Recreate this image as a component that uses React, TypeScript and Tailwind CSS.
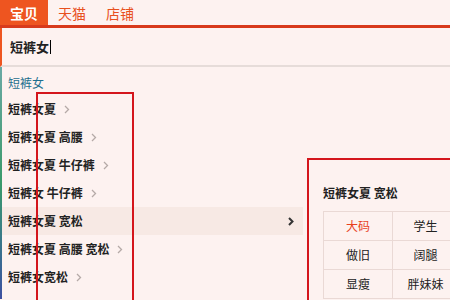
const items = [
  { text: '短裤女夏', chevron: true },
  { text: '短裤女夏 高腰', chevron: true },
  { text: '短裤女夏 牛仔裤', chevron: true },
  { text: '短裤女 牛仔裤', chevron: true },
  { text: '短裤女夏 宽松', chevron: false, active: true },
  { text: '短裤女夏 高腰 宽松', chevron: true },
  { text: '短裤女宽松', chevron: true },
];

const tags = [
  ['大码', '学生'],
  ['做旧', '阔腿'],
  ['显瘦', '胖妹妹'],
];

function Chevron({ dark }: { dark?: boolean }) {
  return (
    <svg width="6" height="9" viewBox="0 0 6 9" className="shrink-0">
      <path
        d="M1 1 L4.5 4.5 L1 8"
        fill="none"
        stroke={dark ? '#333333' : '#b5aaa7'}
        strokeWidth={dark ? 2 : 1.3}
      />
    </svg>
  );
}

export default function App() {
  return (
    <div
      className="relative h-[300px] w-[450px] overflow-hidden bg-[#fdf2f0] text-[#222]"
      style={{ fontFamily: '"Noto Sans CJK SC", "Noto Sans", sans-serif' }}
    >
      {/* tabs */}
      <div className="flex h-[28px] border-b-[3px] border-[#d83a1c]">
        <div className="flex w-[48px] items-center justify-center bg-[#ee5520] pt-[2px] text-[14px] font-bold text-white">
          宝贝
        </div>
        <div className="flex w-[48px] items-center justify-center pt-[2px] text-[14px] text-[#e8501e]">
          天猫
        </div>
        <div className="flex w-[48px] items-center justify-center pt-[2px] text-[14px] text-[#e8501e]">
          店铺
        </div>
      </div>

      {/* input */}
      <div className="flex h-[39px] items-center border-b-2 border-l-2 border-b-[#e6dcd9] border-l-[#ee5520] pl-[8px]">
        <span className="text-[13px] font-bold leading-none">短裤女</span>
        <span className="ml-[1px] h-[14px] w-[1px] bg-black" />
      </div>

      <div className="flex">
        <div className="w-[2px] shrink-0 bg-linear-to-b from-[#6aa9a4] via-[#3a9a6a] to-[#3d4fa0]" />
        {/* suggestion list */}
        <div className="w-[301px] shrink-0">
          <div className="flex h-[28px] items-center pl-[6px] pt-[3px] text-[12px] text-[#1e6f8e]">短裤女</div>
          {items.map((item) => (
            <div
              key={item.text}
              className={`flex h-[28px] items-center pl-[6px] text-[12px] font-bold ${
                item.active ? 'justify-between bg-[#f7e9e4] pr-[9px]' : 'gap-[8px]'
              }`}
            >
              <span>{item.text}</span>
              {item.chevron && <Chevron />}
              {item.active && <Chevron dark />}
            </div>
          ))}
        </div>

        {/* flyout */}
        <div className="shrink-0 pl-[20px] pt-[118px]">
          <div className="text-[12px] font-bold leading-[16px]">短裤女夏 宽松</div>
          <div className="mt-[10px] grid w-[135px] grid-cols-[69px_66px] border-l border-t border-[#ead9d5] text-[12px]">
            {tags.flat().map((t, i) => (
              <div
                key={t}
                className={`flex h-[29px] items-center justify-center border-b border-r border-[#ead9d5] ${
                  i === 0 ? 'text-[#e8401e]' : ''
                }`}
              >
                {t}
              </div>
            ))}
          </div>
        </div>
      </div>

      {/* annotation boxes */}
      <div className="absolute left-[36px] top-[92px] h-[220px] w-[98px] border-2 border-[#d4161c]" />
      <div className="absolute left-[307px] top-[158px] h-[160px] w-[160px] border-2 border-[#d4161c]" />
    </div>
  );
}
